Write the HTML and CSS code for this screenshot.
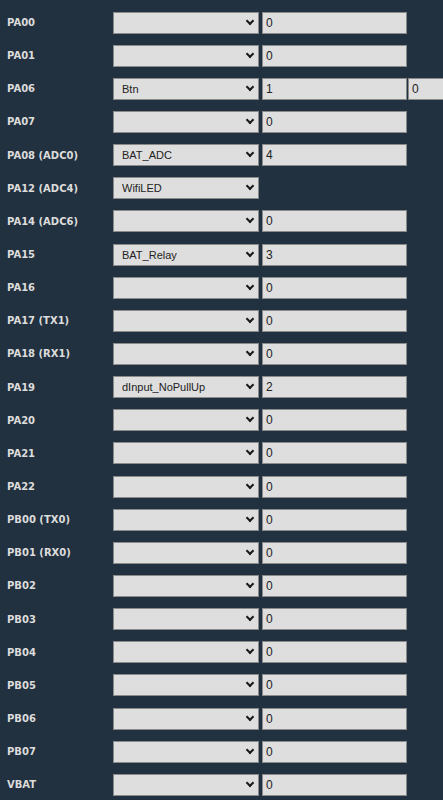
FILE: index.html
```html
<!DOCTYPE html>
<html lang="en">
<head>
    <meta charset="UTF-8">
    <meta name="viewport" content="width=device-width, initial-scale=1.0">
    <title>Pin config</title>
    <link rel="stylesheet" href="styles.css">
</head>
<body>
    <div class="pins">
        <div class="pin-row"><label>PA00</label><span class="pick"><select><option></option></select></span><input type="text" value="0"></div>
        <div class="pin-row"><label>PA01</label><span class="pick"><select><option></option></select></span><input type="text" value="0"></div>
        <div class="pin-row"><label>PA06</label><span class="pick"><select><option>Btn</option></select></span><input type="text" value="1"><input type="text" class="extra" value="0"></div>
        <div class="pin-row"><label>PA07</label><span class="pick"><select><option></option></select></span><input type="text" value="0"></div>
        <div class="pin-row"><label>PA08 (ADC0)</label><span class="pick"><select><option>BAT_ADC</option></select></span><input type="text" value="4"></div>
        <div class="pin-row"><label>PA12 (ADC4)</label><span class="pick"><select><option>WifiLED</option></select></span></div>
        <div class="pin-row"><label>PA14 (ADC6)</label><span class="pick"><select><option></option></select></span><input type="text" value="0"></div>
        <div class="pin-row"><label>PA15</label><span class="pick"><select><option>BAT_Relay</option></select></span><input type="text" value="3"></div>
        <div class="pin-row"><label>PA16</label><span class="pick"><select><option></option></select></span><input type="text" value="0"></div>
        <div class="pin-row"><label>PA17 (TX1)</label><span class="pick"><select><option></option></select></span><input type="text" value="0"></div>
        <div class="pin-row"><label>PA18 (RX1)</label><span class="pick"><select><option></option></select></span><input type="text" value="0"></div>
        <div class="pin-row"><label>PA19</label><span class="pick"><select><option>dInput_NoPullUp</option></select></span><input type="text" value="2"></div>
        <div class="pin-row"><label>PA20</label><span class="pick"><select><option></option></select></span><input type="text" value="0"></div>
        <div class="pin-row"><label>PA21</label><span class="pick"><select><option></option></select></span><input type="text" value="0"></div>
        <div class="pin-row"><label>PA22</label><span class="pick"><select><option></option></select></span><input type="text" value="0"></div>
        <div class="pin-row"><label>PB00 (TX0)</label><span class="pick"><select><option></option></select></span><input type="text" value="0"></div>
        <div class="pin-row"><label>PB01 (RX0)</label><span class="pick"><select><option></option></select></span><input type="text" value="0"></div>
        <div class="pin-row"><label>PB02</label><span class="pick"><select><option></option></select></span><input type="text" value="0"></div>
        <div class="pin-row"><label>PB03</label><span class="pick"><select><option></option></select></span><input type="text" value="0"></div>
        <div class="pin-row"><label>PB04</label><span class="pick"><select><option></option></select></span><input type="text" value="0"></div>
        <div class="pin-row"><label>PB05</label><span class="pick"><select><option></option></select></span><input type="text" value="0"></div>
        <div class="pin-row"><label>PB06</label><span class="pick"><select><option></option></select></span><input type="text" value="0"></div>
        <div class="pin-row"><label>PB07</label><span class="pick"><select><option></option></select></span><input type="text" value="0"></div>
        <div class="pin-row"><label>VBAT</label><span class="pick"><select><option></option></select></span><input type="text" value="0"></div>
    </div>
</body>
</html>
```

FILE: styles.css
```css
/* General Styles */
html, body {
    margin: 0;
    padding: 0;
    background-color: #22313f;
    overflow: hidden;
}

.pins {
    padding-top: 6px;
    width: 443px;
    overflow: hidden;
}

.pin-row {
    display: flex;
    align-items: center;
    height: 33.15px;
    white-space: nowrap;
}

.pin-row label {
    flex: 0 0 106px;
    padding-left: 7px;
    font-family: 'DejaVu Sans', sans-serif;
    font-weight: bold;
    font-size: 10px;
    color: #dcdcdc;
}

.pick {
    position: relative;
    flex: 0 0 146px;
    height: 22px;
}

.pick select {
    appearance: none;
    -webkit-appearance: none;
    width: 146px;
    height: 22px;
    margin: 0;
    padding: 0 0 0 8px;
    border: 1px solid #8a8a8a;
    border-radius: 0;
    background-color: #dedede;
    font-family: 'Liberation Sans', Arial, sans-serif;
    font-size: 11px;
    color: #222;
}

/* chevron over the select */
.pick::after {
    content: "";
    position: absolute;
    right: 6px;
    top: 6px;
    width: 4px;
    height: 4px;
    border-right: 2px solid #1a1a1a;
    border-bottom: 2px solid #1a1a1a;
    transform: rotate(45deg);
    pointer-events: none;
}

input[type="text"] {
    flex: 0 0 145px;
    box-sizing: border-box;
    width: 145px;
    height: 22px;
    margin: 0 0 0 3px;
    padding: 0 3px;
    border: 1px solid #8a8a8a;
    border-radius: 0;
    background-color: #dedede;
    font-family: 'Liberation Sans', Arial, sans-serif;
    font-size: 12px;
    color: #222;
}

input.extra {
    margin-left: 1px;
}
```
